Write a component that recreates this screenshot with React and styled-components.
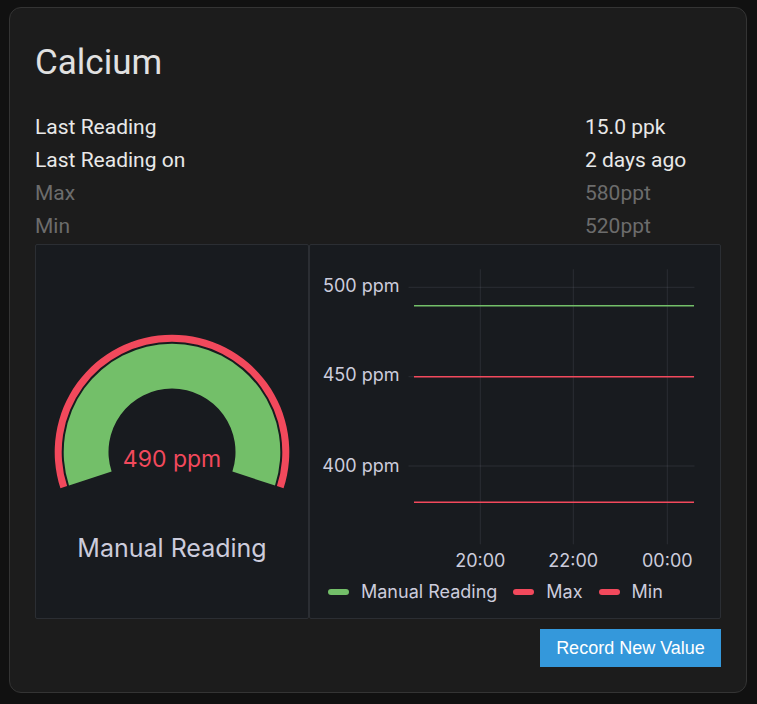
import React from "react";
import styled, { createGlobalStyle } from "styled-components";

const GlobalStyle = createGlobalStyle`
  html, body { margin: 0; padding: 0; background: #111111; }
  body { font-family: Roboto, "Noto Sans", sans-serif; }
  * { box-sizing: border-box; }
`;

const Page = styled.div`
  padding: 7px 10px 0 9px;
`;

const Card = styled.div`
  width: 738px;
  background: #1c1c1c;
  border: 1px solid #343434;
  border-radius: 12px;
  padding: 31px 25px 25px 25px;
  display: flex;
  flex-direction: column;
`;

const Title = styled.h1`
  margin: 0;
  font-family: Roboto, sans-serif;
  font-weight: 400;
  font-size: 35px;
  line-height: 48px;
  color: #e1e1e1;
`;

const InfoList = styled.div`
  margin-top: 24px;
  display: grid;
  grid-template-columns: 1fr 136px;
`;

const Cell = styled.div`
  font-family: Roboto, sans-serif;
  font-size: 21px;
  line-height: 33px;
  color: ${(p) => (p.$muted ? "#6c6c6c" : "#e8e8e8")};
  white-space: nowrap;
`;

const Panels = styled.div`
  margin-top: 1px;
  display: flex;
  height: 375px;
`;

const Panel = styled.div`
  background: #181b1f;
  border: 1px solid #2b2e33;
  border-radius: 2px;
  display: flex;
  flex-direction: column;
  font-family: Inter, "Noto Sans", sans-serif;
  color: #ccccdc;
  ${(p) => (p.$width ? `width: ${p.$width}px; flex: none;` : "flex: 1;")}
`;

const GaugeSvg = styled.svg`
  display: block;
  margin: 87px auto 0 auto;
`;

const GaugeLabel = styled.div`
  margin-top: 41px;
  text-align: center;
  font-size: 25px;
  line-height: 30px;
  color: #ccccdc;
`;

const ChartSvg = styled.svg`
  display: block;
`;

const Legend = styled.div`
  margin-top: 5px;
  padding-left: 18px;
  display: flex;
  align-items: center;
  gap: 16px;
  font-size: 18px;
  line-height: 24px;
  color: #ccccdc;
`;

const LegendItem = styled.div`
  display: flex;
  align-items: center;
  gap: 12px;
`;

const Swatch = styled.span`
  display: block;
  width: 21px;
  height: 6px;
  border-radius: 3px;
  background: ${(p) => p.$color};
`;

const Footer = styled.div`
  margin-top: 10px;
  display: flex;
  justify-content: flex-end;
`;

const Button = styled.button`
  height: 38px;
  padding: 0 16px;
  min-width: 181px;
  border: none;
  border-radius: 0;
  background: #3498db;
  color: #ffffff;
  font-family: "Liberation Sans", Arial, sans-serif;
  font-size: 18px;
  cursor: pointer;
`;

const GREEN = "#73bf69";
const RED = "#f2495c";

function pt(cx, cy, r, deg) {
  const a = (deg * Math.PI) / 180;
  return [cx + r * Math.cos(a), cy + r * Math.sin(a)];
}

function sector(cx, cy, R, r, a0, a1) {
  const [x0, y0] = pt(cx, cy, R, a0);
  const [x1, y1] = pt(cx, cy, R, a1);
  const [x2, y2] = pt(cx, cy, r, a1);
  const [x3, y3] = pt(cx, cy, r, a0);
  const f = (n) => n.toFixed(2);
  return `M${f(x0)} ${f(y0)} A${R} ${R} 0 1 1 ${f(x1)} ${f(y1)} L${f(x2)} ${f(y2)} A${r} ${r} 0 1 0 ${f(x3)} ${f(y3)} Z`;
}

function Gauge() {
  const cx = 120;
  const cy = 120;
  return (
    <GaugeSvg width="240" height="160" viewBox="0 0 240 160">
      <path d={sector(cx, cy, 117.3, 110.3, 162, 378)} fill={RED} />
      <path d={sector(cx, cy, 108.3, 63.5, 162, 378)} fill={GREEN} />
      <text
        x="120"
        y="134.5"
        textAnchor="middle"
        fill={RED}
        fontFamily="Inter, sans-serif"
        fontSize="23"
      >
        490 ppm
      </text>
    </GaugeSvg>
  );
}

function Chart() {
  const grid = "rgba(204,204,220,0.11)";
  const yTicks = [
    { y: 42.3, base: 47.3, label: "500 ppm" },
    { y: 131.7, base: 136.2, label: "450 ppm" },
    { y: 221, base: 226.5, label: "400 ppm" },
  ];
  const xTicks = [
    { x: 170.3, label: "20:00" },
    { x: 263.3, label: "22:00" },
    { x: 357.3, label: "00:00" },
  ];
  return (
    <ChartSvg width="409" height="330" viewBox="0 0 409 330">
      {yTicks.map((t) => (
        <line key={t.label} x1="98.5" x2="384.5" y1={t.y} y2={t.y} stroke={grid} strokeWidth="1" />
      ))}
      {xTicks.map((t) => (
        <line key={t.label} x1={t.x} x2={t.x} y1="24.3" y2="299.3" stroke={grid} strokeWidth="1" />
      ))}
      <line x1="104" x2="384" y1="60.7" y2="60.7" stroke={GREEN} strokeWidth="1.6" />
      <line x1="104" x2="384" y1="131.7" y2="131.7" stroke={RED} strokeWidth="1.6" />
      <line x1="104" x2="384" y1="257.3" y2="257.3" stroke={RED} strokeWidth="1.6" />
      {yTicks.map((t) => (
        <text
          key={t.label}
          x="89.5"
          y={t.base}
          textAnchor="end"
          fill="#ccccdc"
          fontFamily="Inter, sans-serif"
          fontSize="18"
        >
          {t.label}
        </text>
      ))}
      {xTicks.map((t) => (
        <text
          key={t.label}
          x={t.x}
          y="321.5"
          textAnchor="middle"
          fill="#ccccdc"
          fontFamily="Inter, sans-serif"
          fontSize="18"
        >
          {t.label}
        </text>
      ))}
    </ChartSvg>
  );
}

const rows = [
  { label: "Last Reading", value: "15.0 ppk" },
  { label: "Last Reading on", value: "2 days ago" },
  { label: "Max", value: "580ppt", muted: true },
  { label: "Min", value: "520ppt", muted: true },
];

export default function App() {
  return (
    <>
      <GlobalStyle />
      <Page>
        <Card>
          <Title>Calcium</Title>
          <InfoList>
            {rows.map((r) => (
              <React.Fragment key={r.label}>
                <Cell $muted={r.muted}>{r.label}</Cell>
                <Cell $muted={r.muted}>{r.value}</Cell>
              </React.Fragment>
            ))}
          </InfoList>
          <Panels>
            <Panel $width={274}>
              <Gauge />
              <GaugeLabel>Manual Reading</GaugeLabel>
            </Panel>
            <Panel>
              <Chart />
              <Legend>
                <LegendItem>
                  <Swatch $color={GREEN} />
                  Manual Reading
                </LegendItem>
                <LegendItem>
                  <Swatch $color={RED} />
                  Max
                </LegendItem>
                <LegendItem>
                  <Swatch $color={RED} />
                  Min
                </LegendItem>
              </Legend>
            </Panel>
          </Panels>
          <Footer>
            <Button>Record New Value</Button>
          </Footer>
        </Card>
      </Page>
    </>
  );
}
